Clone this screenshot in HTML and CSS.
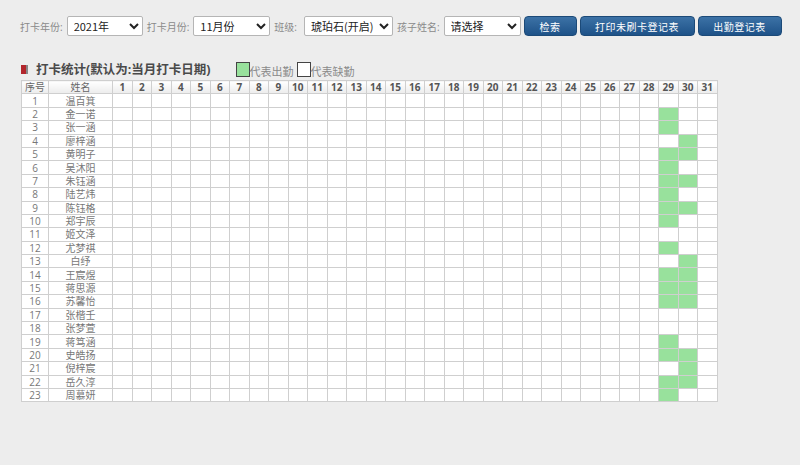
FILE: index.html
```html
<!DOCTYPE html>
<html lang="zh-CN">
<head>
  <meta charset="UTF-8" />
  <title>打卡统计</title>
  <link rel="stylesheet" href="styles.css">
</head>
<body>
  <div class="toolbar">
    <label>打卡年份:</label>
    <select class="sel sel-year"><option>2021年</option></select>
    <label>打卡月份:</label>
    <select class="sel sel-month"><option>11月份</option></select>
    <label class="lbl-class">班级:</label>
    <select class="sel sel-class"><option>琥珀石(开启)</option></select>
    <label>孩子姓名:</label>
    <select class="sel sel-child"><option>请选择</option></select>
    <button class="btn btn-search">检索</button>
    <button class="btn btn-print">打印未刷卡登记表</button>
    <button class="btn btn-sheet">出勤登记表</button>
  </div>

  <div class="title-row">
    <span class="title-icon"></span>
    <h2>打卡统计(默认为:当月打卡日期)</h2>
    <div class="legend">
      <span class="box box-on"></span><span>代表出勤</span>
      <span class="box box-off"></span><span>代表缺勤</span>
    </div>
  </div>

  <table class="att" id="att"></table>

  <script>
    var names = ["温百箕","金一诺","张一涵","廖梓涵","黄明子","吴沐阳","朱钰涵","陆艺炜","陈钰格","郑宇辰",
      "姬文泽","尤梦祺","白纾","王宸煜","蒋思源","苏馨怡","张楷壬","张梦萱","蒋笃涵","史皓扬",
      "倪梓宸","岳久淳","周慕妍"];
    // 1 = 29号出勤, 2 = 30号出勤, 3 = 都出勤
    var marks = [0,1,1,2,3,1,3,1,3,1,0,1,2,3,3,3,0,0,1,3,2,3,1];

    var html = '<colgroup><col class="w-no"><col class="w-name">';
    for (var d = 1; d <= 31; d++) html += '<col class="w-day">';
    html += '</colgroup>';

    html += '<tr><th class="c-txt">序号</th><th class="c-txt">姓名</th>';
    for (var d = 1; d <= 31; d++) html += '<th>' + d + '</th>';
    html += '</tr>';

    names.forEach(function (n, i) {
      html += '<tr><td>' + (i + 1) + '</td><td>' + n + '</td>';
      for (var d = 1; d <= 31; d++) {
        var on = (d == 29 && (marks[i] & 1)) || (d == 30 && (marks[i] & 2));
        html += on ? '<td class="on"></td>' : '<td></td>';
      }
      html += '</tr>';
    });
    document.getElementById('att').innerHTML = html;
  </script>
</body>
</html>
```

FILE: styles.css
```css
body {
  margin: 0;
  padding: 16px 0 16px 20px;
  background: #ededed;
  font-family: "Open Sans", "Noto Sans CJK SC", sans-serif;
  color: #555;
}
.toolbar {
  display: flex;
  align-items: center;
  height: 20px;
}
.toolbar > * {
  flex-shrink: 0;
}
.toolbar label {
  font-size: 10px;
  color: #8a8a8a;
  margin-right: 4px;
  white-space: nowrap;
}
.toolbar .lbl-class {
  margin-right: 7px;
}
.sel {
  height: 20px;
  border: 1px solid #b5b5b5;
  border-radius: 2px;
  background: #fff;
  font-family: "Noto Sans CJK SC", sans-serif;
  font-size: 11px;
  color: #222;
  padding: 0 2px;
  margin-right: 4px;
}
.sel-year { width: 76px; }
.sel-month { width: 77px; }
.sel-class { width: 89px; }
.sel-child { width: 77px; margin-right: 3px; }
.btn {
  height: 20px;
  border: 1px solid #1c4a78;
  border-radius: 4px;
  background: linear-gradient(#3c72a6, #1e5288);
  color: #fff;
  font-family: "Noto Sans CJK SC", sans-serif;
  font-size: 10px;
  letter-spacing: 0.5px;
  padding: 0;
  margin-right: 3px;
  cursor: pointer;
}
.btn-search { width: 53px; }
.btn-print { width: 115px; }
.btn-sheet { width: 84px; }

.title-row {
  display: flex;
  align-items: flex-end;
  margin-top: 24px;
  margin-left: 1px;
  height: 18px;
}
.title-icon {
  width: 5px;
  height: 9px;
  background: #b2262c;
  border-right: 2px solid #888;
  margin: 0 8px 4px 0;
}
.title-row h2 {
  margin: 0;
  font-size: 12.5px;
  font-weight: bold;
  color: #4a4a4a;
  line-height: 17px;
}
.legend {
  display: flex;
  align-items: flex-end;
  margin-left: 25px;
  font-size: 11px;
  color: #8a8a8a;
  line-height: 13px;
}
.box {
  display: inline-block;
  width: 12px;
  height: 13px;
  border: 1px solid #444;
  margin-bottom: 1px;
}
.box-on { background: #98e19c; }
.box-off { background: #fff; margin-left: 3px; }

.att {
  margin-left: 1px;
  margin-top: 2px;
  border-collapse: collapse;
  table-layout: fixed;
  width: 696px;
  background: #fff;
}
.w-no { width: 27px; }
.w-name { width: 64px; }
.w-day { width: 19.5px; }
.att th, .att td {
  border: 1px solid #cfcfcf;
  height: 12.4px;
  padding: 0;
  text-align: center;
  font-size: 10px;
  line-height: 12px;
  overflow: hidden;
  white-space: nowrap;
}
.att th {
  background: linear-gradient(#fff, #ececec);
  color: #555;
  font-weight: bold;
}
.att th.c-txt { font-weight: normal; color: #666; }
.att td { color: #777; }
.att td.on { background: #98e19c; }
```
